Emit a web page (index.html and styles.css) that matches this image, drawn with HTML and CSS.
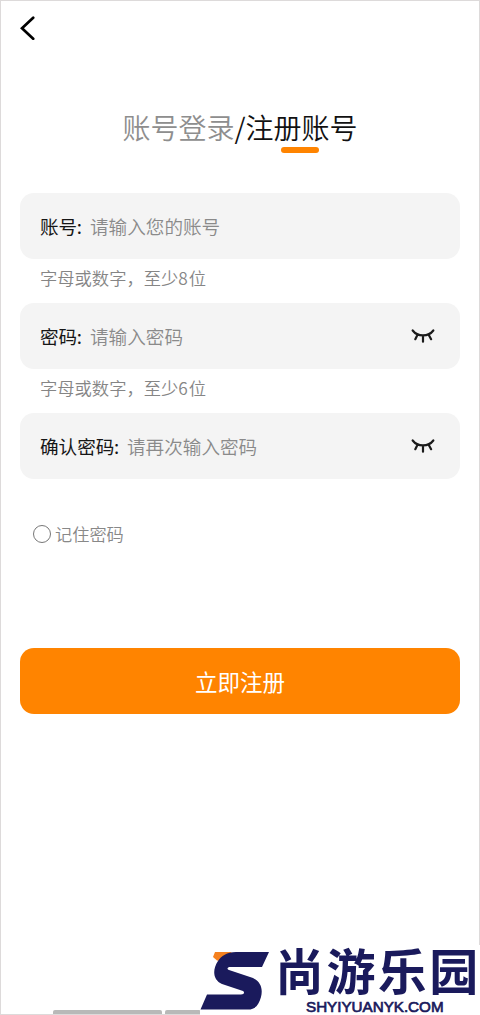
FILE: index.html
```html
<!DOCTYPE html>
<html lang="zh-CN">
<head>
<meta charset="utf-8">
<title>注册账号</title>
<link rel="stylesheet" href="styles.css">
</head>
<body>
<div class="screen">
  <header class="topbar">
    <svg class="back" viewBox="0 0 16 24" width="16" height="24"><path d="M13.2 1.7 2 12.2 13.2 22.8" fill="none" stroke="#000" stroke-width="2.7" stroke-linecap="round"/></svg>
  </header>
  <nav class="tabs">
    <span class="tab muted">账号登录</span><span class="tab slash">/</span><span class="tab active">注册账号</span>
  </nav>
  <div class="underline"></div>
  <form class="form">
    <div class="field"><label class="label">账号<span class="colon">:</span></label><span class="placeholder">请输入您的账号</span></div>
    <p class="hint">字母或数字，至少<span class="digit">8</span>位</p>
    <div class="field"><label class="label">密码<span class="colon">:</span></label><span class="placeholder">请输入密码</span>
      <svg class="eye" viewBox="0 0 24 14" width="24" height="14"><path d="M1.7 1.500C6.500 8 17.500 8 22.300 1.500M6.400 6 4.300 10.200M12 7V12.700M17.800 6 20.100 10.200" fill="none" stroke="#1b1b1b" stroke-width="2.2" stroke-linecap="round"/></svg>
    </div>
    <p class="hint">字母或数字，至少<span class="digit">6</span>位</p>
    <div class="field"><label class="label">确认密码<span class="colon">:</span></label><span class="placeholder">请再次输入密码</span>
      <svg class="eye" viewBox="0 0 24 14" width="24" height="14"><path d="M1.7 1.500C6.500 8 17.500 8 22.300 1.500M6.400 6 4.300 10.200M12 7V12.700M17.800 6 20.100 10.200" fill="none" stroke="#1b1b1b" stroke-width="2.2" stroke-linecap="round"/></svg>
    </div>
    <div class="remember"><span class="radio"></span><span class="remember-text">记住密码</span></div>
    <button class="submit" type="button">立即注册</button>
  </form>
  <div class="bottom"><span class="bar long"></span><span class="bar short"></span></div>
</div>
<div class="brand">
  <svg class="logo" viewBox="0 0 70 60" width="70" height="60"><path d="M15 2H32L20 11 17 10.500 13 7Z" fill="#f5811f"/><path d="M69 2H36C27 2 21 6 18 11C12 20 13 30 22 34L43 41C45 42 44 44.500 41 44.500H7L0.500 59.500H48C56 59.500 59 54 61 47C63 39 61 32 53 28L29 20C26 18.500 28 16.500 31 17H62Z" fill="#1a1a5c"/></svg>
  <div class="words"><div class="name">尚游乐园</div><div class="site">SHYIYUANYK.COM</div></div>
</div>
</body>
</html>
```
FILE: styles.css
```css
* { box-sizing: border-box; }
body {
  margin: 0;
  background: #fff;
  font-family: "Noto Sans CJK SC", sans-serif;
  font-weight: 350;
}
.screen {
  display: flex;
  flex-direction: column;
  width: 480px;
  height: 1015px;
  border: 1px solid #dddada;
  overflow: hidden;
}
.topbar { height: 106px; padding: 15px 0 0 19px; }
.back { display: block; }
.tabs {
  display: flex;
  justify-content: center;
  height: 40px;
  line-height: 41px;
  font-size: 28px;
}
.muted { color: #8e8e8e; }
.slash { width: 11px; text-align: center; color: #111; }
.active { color: #111; }
.underline {
  width: 38px;
  height: 6px;
  margin: 0 0 0 280px;
  border-radius: 3px;
  background: #ff8400;
}
.form { padding: 40px 19px 0; }
.field {
  display: flex;
  align-items: center;
  height: 66px;
  padding: 0 25px 2px 20px;
  border-radius: 14px;
  background: #f4f4f4;
  font-size: 18.6px;
}
.label { width: 50px; color: #161616; font-weight: 400; white-space: nowrap; }
.field:nth-of-type(3) .label { width: 87px; }
.colon { margin-left: -0.5px; }
.placeholder { color: #8a8a8a; }
.eye { margin: 1px 0 0 auto; }
.hint {
  height: 44px;
  margin: 0;
  padding-left: 20px;
  line-height: 38px;
  font-size: 17.3px;
  color: #858585;
}
.digit { margin-right: 1px; }
.remember {
  display: flex;
  align-items: center;
  gap: 4px;
  height: 26px;
  margin: 42px 0 0 13px;
  font-size: 17.2px;
  color: #888;
}
.remember-text { padding-bottom: 1px; }
.radio { width: 18px; height: 18px; border: 1px solid #777; border-radius: 50%; }
.submit {
  display: block;
  width: 100%;
  height: 66px;
  margin-top: 101px;
  padding: 0 0 1px;
  border: 0;
  border-radius: 14px;
  background: #ff8400;
  color: #fff;
  font: 400 22.500px "Noto Sans CJK SC", sans-serif;
}
.bottom { display: flex; gap: 3px; margin: auto 0 0 52px; }
.bar { height: 4px; border-radius: 2px 2px 0 0; background: #b8b9b8; }
.long { width: 109px; }
.short { width: 36px; }
.brand {
  position: absolute;
  left: 200px;
  top: 945px;
  display: flex;
  width: 280px;
  height: 70px;
  background: #fff;
  color: #1a1a5c;
}
.logo { flex: none; margin-top: 5px; }
.words { margin-left: 5px; }
.name {
  height: 53px;
  line-height: 48px;
  font-size: 49px;
  font-weight: 700;
  letter-spacing: 2.4px;
  white-space: nowrap;
}
.site {
  padding-left: 31px;
  font: 400 15.2px/17px "Liberation Sans", sans-serif;
  -webkit-text-stroke: 0.7px #1a1a5c;
  white-space: nowrap;
}
```
